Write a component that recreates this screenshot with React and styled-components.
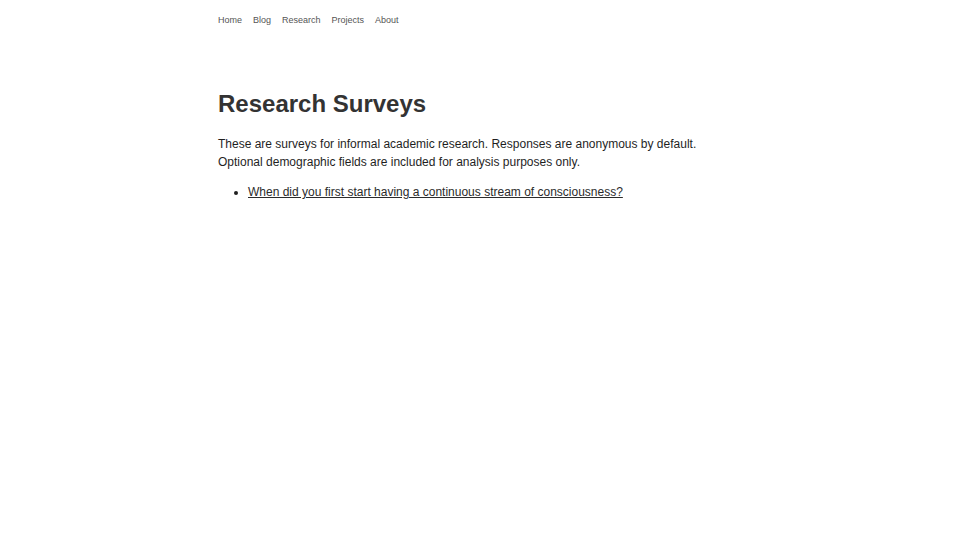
import React from "react";
import styled, { createGlobalStyle } from "styled-components";

const Global = createGlobalStyle`
  html, body { margin: 0; padding: 0; background: #fff; }
  body { font-family: "Liberation Sans", Arial, Helvetica, sans-serif; color: #222; }
`;

const Page = styled.div`
  max-width: 524px;
  margin: 0 auto;
  padding: 14px 0 40px;
`;

const Nav = styled.nav`
  display: flex;
  gap: 11px;
  font-size: 9px;
  line-height: 13px;
`;

const NavLink = styled.a`
  color: #555;
  text-decoration: none;
`;

const Title = styled.h1`
  margin: 61px 0 0;
  font-size: 24px;
  line-height: 32px;
  font-weight: 700;
  color: #333;
`;

const Intro = styled.p`
  margin: 15px 0 0;
  font-size: 12px;
  line-height: 18px;
  color: #1f1f1f;
`;

const List = styled.ul`
  margin: 12px 0 0;
  padding-left: 30px;
  font-size: 12px;
  line-height: 18px;
  color: #1f1f1f;
`;

const Item = styled.li``;

const SurveyLink = styled.a`
  color: #2b2b2b;
  text-decoration: underline;
`;

export default function App() {
  return (
    <>
      <Global />
      <Page>
        <Nav>
          {["Home", "Blog", "Research", "Projects", "About"].map((l) => (
            <NavLink key={l} href="#">{l}</NavLink>
          ))}
        </Nav>
        <Title>Research Surveys</Title>
        <Intro>
          These are surveys for informal academic research. Responses are anonymous by default.
          Optional demographic fields are included for analysis purposes only.
        </Intro>
        <List>
          <Item>
            <SurveyLink href="#">When did you first start having a continuous stream of consciousness?</SurveyLink>
          </Item>
        </List>
      </Page>
    </>
  );
}
